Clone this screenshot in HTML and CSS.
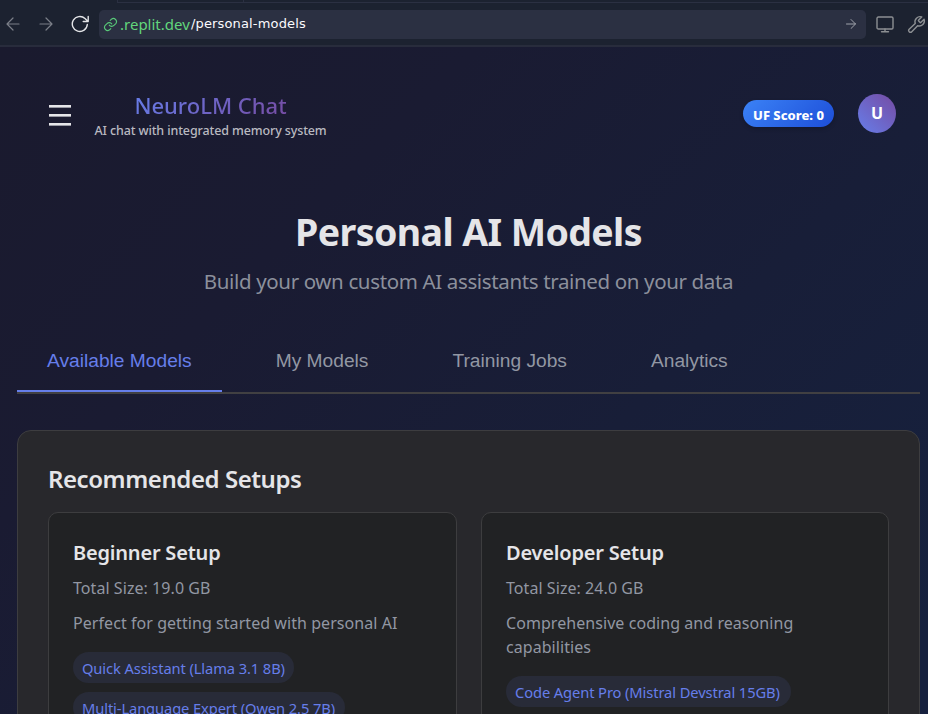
FILE: index.html
```html
<!DOCTYPE html>
<html lang="en">
<head>
<meta charset="utf-8">
<title>NeuroLM Chat</title>
<link rel="stylesheet" href="styles.css">
</head>
<body>
<header class="toolbar">
  <div class="tab-edge"></div>
  <svg class="icon back" viewBox="0 0 14 14"><path d="M13 7H1M7 1L1 7l6 6"/></svg>
  <svg class="icon forward" viewBox="0 0 14 14"><path d="M1 7h12M7 1l6 6-6 6"/></svg>
  <svg class="icon reload" viewBox="0 0 18 18"><path d="M16.300 9.500A7.500 7.500 0 1 1 14 3.600L16.800 6.300M17.200 1.500v5h-5"/></svg>
  <div class="address">
    <svg class="icon link" viewBox="0 0 24 24"><path d="M10 13a5 5 0 0 0 7.500.500l3-3a5 5 0 0 0-7-7l-2 2M14 11a5 5 0 0 0-7.500-.500l-3 3a5 5 0 0 0 7 7l2-2"/></svg>
    <span class="host">.replit.dev</span><span class="path">/personal-models</span>
    <svg class="icon go" viewBox="0 0 10 10"><path d="M.5 5h9M5 .5L9.500 5 5 9.500"/></svg>
  </div>
  <svg class="icon screen" viewBox="0 0 18 17"><rect x="1" y="1" width="16" height="12" rx="1.300"/><path d="M9 13v2.500M5.500 15.700h7"/></svg>
  <svg class="icon wrench" viewBox="0 0 24 24"><path d="M14.700 6.300a1 1 0 0 0 0 1.400l1.600 1.600a1 1 0 0 0 1.400 0l3.900-3.900a6.500 6.500 0 0 1-8.200 8.200l-7.700 7.900a2.400 2.400 0 0 1-3.300-3.300l8-7.600a6.500 6.500 0 0 1 8.200-8.200z"/></svg>
</header>
<div class="page">
  <div class="app-header">
    <div class="menu"><i></i><i></i><i></i></div>
    <div class="brand">
      <div class="brand-name">NeuroLM Chat</div>
      <div class="brand-sub">AI chat with integrated memory system</div>
    </div>
    <div class="score"><span>UF Score: 0</span></div>
    <div class="avatar">U</div>
  </div>
  <div class="hero">
    <h1><span>Personal AI Models</span></h1>
    <p><span>Build your own custom AI assistants trained on your data</span></p>
  </div>
  <nav class="tabs">
    <a class="tab active">Available Models</a>
    <a class="tab">My Models</a>
    <a class="tab">Training Jobs</a>
    <a class="tab">Analytics</a>
  </nav>
  <section class="panel">
    <h2><span>Recommended Setups</span></h2>
    <div class="grid">
      <article class="card">
        <h3>Beginner Setup</h3>
        <p class="size">Total Size: 19.0 GB</p>
        <p class="desc">Perfect for getting started with personal AI</p>
        <div class="chips">
          <span class="chip chip-quick">Quick Assistant (Llama 3.1 8B)</span>
          <span class="chip chip-multi">Multi-Language Expert (Qwen 2.5 7B)</span>
        </div>
      </article>
      <article class="card">
        <h3>Developer Setup</h3>
        <p class="size">Total Size: 24.0 GB</p>
        <p class="desc">Comprehensive coding and reasoning<br>capabilities</p>
        <div class="chips">
          <span class="chip chip-code">Code Agent Pro (Mistral Devstral 15GB)</span>
        </div>
      </article>
    </div>
  </section>
</div>
</body>
</html>
```
FILE: styles.css
```css
* { box-sizing: border-box; }
body {
  margin: 0;
  height: 714px;
  overflow: hidden;
  display: flex;
  flex-direction: column;
  font-family: "Noto Sans", "Open Sans", sans-serif;
  color: #e5e5e8;
  background: #1a1a2e;
}
h1, h2, h3, p { margin: 0; white-space: nowrap; }

.toolbar {
  position: relative;
  flex: none;
  height: 47px;
  display: flex;
  align-items: center;
  padding: 3px 3px 0 6px;
  background: #1c2230;
  border-bottom: 2px solid #282c3c;
}
.tab-edge {
  position: absolute;
  left: 117px;
  right: 0;
  top: 0;
  height: 3px;
  border-left: 1px solid #2b3042;
  border-bottom: 1px solid #2b3042;
}
.tab-edge::after {
  content: "";
  position: absolute;
  left: 125px;
  top: 0;
  width: 1px;
  height: 2px;
  background: #2b3042;
}
.icon { flex: none; display: block; fill: none; stroke: #888b93; stroke-width: 1.2; stroke-linecap: round; stroke-linejoin: round; }
.back, .forward { width: 14px; height: 14px; stroke: #7b7f88; }
.forward { margin-left: 19px; }
.reload { width: 18px; height: 18px; margin-left: 18px; stroke: #e4e5e8; stroke-width: 1.4; }
.address {
  flex: none;
  width: 767px;
  height: 29px;
  margin-left: 10px;
  padding: 0 10px 0 4px;
  display: flex;
  align-items: center;
  border-radius: 5px;
  background: #2b3042;
  white-space: nowrap;
}
.link { width: 15px; height: 15px; stroke: #58c878; stroke-width: 1.800; }
.host { margin-left: 2px; width: 71px; font-size: 15px; line-height: 20px; color: #62d67c; }
.path { font-family: "DejaVu Sans", sans-serif; font-size: 13px; line-height: 20px; color: #fbfbfe; letter-spacing: 0.15px; }
.go { width: 10px; height: 10px; margin-left: auto; stroke: #a0a3ab; stroke-width: 1; }
.screen { width: 18px; height: 17px; margin-left: 10px; stroke: #8c8f92; stroke-width: 1.4; }
.wrench { width: 19px; height: 19px; margin-left: 13px; stroke: #8c8f92; stroke-width: 1.8; }

.page {
  flex: 1;
  min-height: 0;
  overflow: hidden;
  padding: 34px 8px 0 17px;
  background: linear-gradient(135deg, #1a1a2e 0%, #1a1b32 30%, #16213e 95%);
}
.app-header { display: flex; height: 70px; padding: 0 24px 0 32px; }
.menu { width: 22px; margin-top: 24px; display: flex; flex-direction: column; gap: 6px; }
.menu i { flex: none; height: 3px; background: #e5e5e8; border-bottom: 1px solid #9898a2; }
.brand { width: 233px; margin: 9px 0 0 23px; text-align: center; white-space: nowrap; }
.brand-name {
  width: max-content;
  margin: 0 auto;
  font-size: 22px;
  line-height: 30px;
  font-weight: 500;
  background: linear-gradient(135deg, #667eea, #764ba2);
  -webkit-background-clip: text;
  background-clip: text;
  color: transparent;
}
.brand-sub { margin-top: 2px; font-size: 12.500px; line-height: 18px; color: #b9b9c0; font-weight: 500; letter-spacing: -0.12px; }
.score {
  width: 91px;
  height: 27px;
  margin: 19px 0 0 auto;
  border-radius: 14px;
  background: linear-gradient(135deg, #3b82f6, #1d4ed8);
  box-shadow: 0 2px 4px rgba(0, 0, 0, .2);
  color: #fff;
  font-size: 13px;
  line-height: 30px;
  font-weight: 800;
  text-align: center;
  white-space: nowrap;
}
.avatar {
  width: 38px;
  height: 39px;
  margin: 13px 0 0 24px;
  border-radius: 50%;
  background: linear-gradient(45deg, #667eea, #764ba2);
  color: #fff;
  font-size: 16px;
  line-height: 38px;
  font-weight: 700;
  text-align: center;
}
.hero { padding-top: 53px; text-align: center; }
.hero h1 { font-size: 37.500px; line-height: 56px; font-weight: 700; letter-spacing: -0.6px; }
.hero p { margin-top: 6px; font-size: 20.500px; line-height: 30px; color: #8c909c; letter-spacing: -0.36px; }

.tabs { display: flex; height: 66px; margin-top: 32px; border-bottom: 2px solid #414042; }
.tab {
  height: 64px;
  padding: 21px 30px 0;
  margin-right: 24px;
  font-family: "Liberation Sans", Arial, sans-serif;
  font-size: 19.200px;
  line-height: 24px;
  color: #9297a3;
  white-space: nowrap;
}
.tab.active { color: #667eea; border-bottom: 2px solid #667eea; }

.panel {
  height: 400px;
  margin-top: 36px;
  padding: 30px;
  border: 1px solid #3d3d40;
  border-radius: 14px;
  background: #28282c;
}
.panel h2 { font-size: 24px; line-height: 35px; font-weight: 600; letter-spacing: -0.43px; }
.grid { display: grid; grid-template-columns: 409px 408px; gap: 24px; margin-top: 16px; }
.card {
  height: 320px;
  padding: 25px 24px;
  border: 1px solid #3d3d3f;
  border-radius: 10px;
  background: #212224;
}
.card h3 { font-size: 20px; line-height: 30px; font-weight: 600; letter-spacing: -0.2px; }
.size, .desc { font-size: 16px; line-height: 24px; color: #9297a3; letter-spacing: 0.06px; }
.size { margin-top: 8px; }
.desc { margin-top: 11px; }
.chips { display: flex; flex-direction: column; align-items: flex-start; gap: 9px; margin-top: 17px; }
.chip {
  height: 31px;
  padding-left: 9px;
  border-radius: 16px;
  background: #282b38;
  color: #667eea;
  font-size: 14.700px;
  line-height: 33px;
  letter-spacing: -0.1px;
  white-space: nowrap;
}
.chip-quick { width: 221px; }
.chip-multi { width: 272px; }
.chip-code { width: 285px; }
```
